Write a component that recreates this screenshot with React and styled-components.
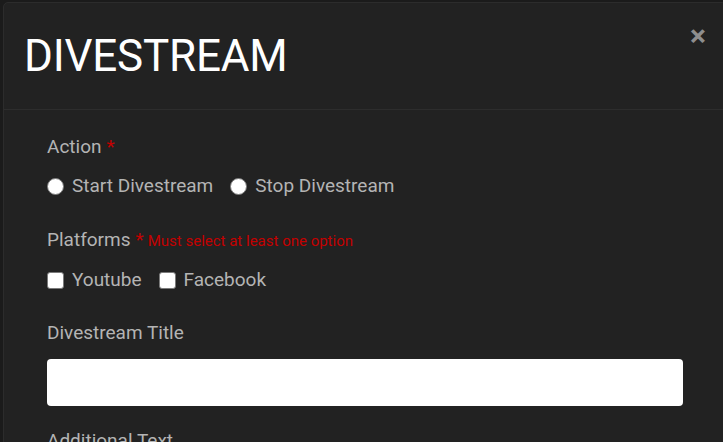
import React from 'react'
import styled, { createGlobalStyle } from 'styled-components'

const GlobalStyle = createGlobalStyle`
	html, body {
		margin: 0;
		padding: 0;
		background: #1b1b1b;
		overflow: hidden;
	}
	* {
		box-sizing: border-box;
	}
`

const Backdrop = styled.div`
	width: 723px;
	height: 442px;
	padding: 2px 0 0 3px;
	overflow: hidden;
	background: #1b1b1b;
	font-family: Roboto, 'Liberation Sans', sans-serif;
`

const Modal = styled.div`
	width: 724px;
	background: #222222;
	border: 1px solid #2c2c2c;
	border-radius: 5px;
`

const Header = styled.div`
	height: 107px;
	display: flex;
	align-items: center;
	justify-content: space-between;
	padding: 0 0 0 20px;
	border-bottom: 1px solid #2d2d2d;
`

const Title = styled.h1`
	margin: 1px 0 0;
	font-size: 44px;
	font-weight: 400;
	line-height: 1.1;
	color: #ffffff;
	letter-spacing: -0.2px;
`

const Close = styled.button`
	align-self: flex-start;
	margin: 18px 20px 0 0;
	padding: 0;
	border: 0;
	background: transparent;
	font-family: Roboto, 'Liberation Sans', sans-serif;
	font-size: 30px;
	font-weight: 700;
	line-height: 1;
	color: #8e8e8e;
`

const Body = styled.div`
	padding: 25px 43px 0 43px;
`

const Group = styled.div`
	margin-bottom: ${p => p.gap || 30}px;
`

const Label = styled.div`
	font-size: 19px;
	line-height: 24px;
	color: #b4b4b4;
	margin-bottom: ${p => p.gap || 15}px;
`

const Required = styled.span`
	color: #c40000;
	margin-left: 5px;
`

const Hint = styled.span`
	color: #c40000;
	font-size: 15px;
	margin-left: 4px;
`

const Options = styled.div`
	display: flex;
	align-items: center;
	height: 24px;
`

const Option = styled.label`
	display: flex;
	align-items: center;
	gap: 8px;
	margin-right: 17px;
	font-size: 19px;
	line-height: 24px;
	color: #b4b4b4;
`

const Radio = styled.input.attrs({ type: 'radio' })`
	appearance: none;
	margin: 0;
	width: 17px;
	height: 17px;
	border-radius: 50%;
	background: #ffffff;
	border: 1px solid #7a7a7a;
`

const Check = styled.input.attrs({ type: 'checkbox' })`
	appearance: none;
	margin: 0;
	width: 17px;
	height: 17px;
	border-radius: 3px;
	background: #ffffff;
	border: 1px solid #7a7a7a;
`

const TextInput = styled.input`
	display: block;
	width: 100%;
	height: 47px;
	border: 0;
	border-radius: 4px;
	background: #ffffff;
	font-size: 16px;
`

export default function App() {
	return (
		<Backdrop>
			<GlobalStyle />
			<Modal>
				<Header>
					<Title>DIVESTREAM</Title>
					<Close>×</Close>
				</Header>
				<Body>
					<Group>
						<Label>Action<Required>*</Required></Label>
						<Options>
							<Option><Radio name="action" />Start Divestream</Option>
							<Option><Radio name="action" />Stop Divestream</Option>
						</Options>
					</Group>
					<Group gap={29}>
						<Label>Platforms<Required>*</Required><Hint>Must select at least one option</Hint></Label>
						<Options>
							<Option><Check />Youtube</Option>
							<Option><Check />Facebook</Option>
						</Options>
					</Group>
					<Group gap={23}>
						<Label gap={14}>Divestream Title</Label>
						<TextInput type="text" />
					</Group>
					<Group>
						<Label>Additional Text</Label>
					</Group>
				</Body>
			</Modal>
		</Backdrop>
	)
}
